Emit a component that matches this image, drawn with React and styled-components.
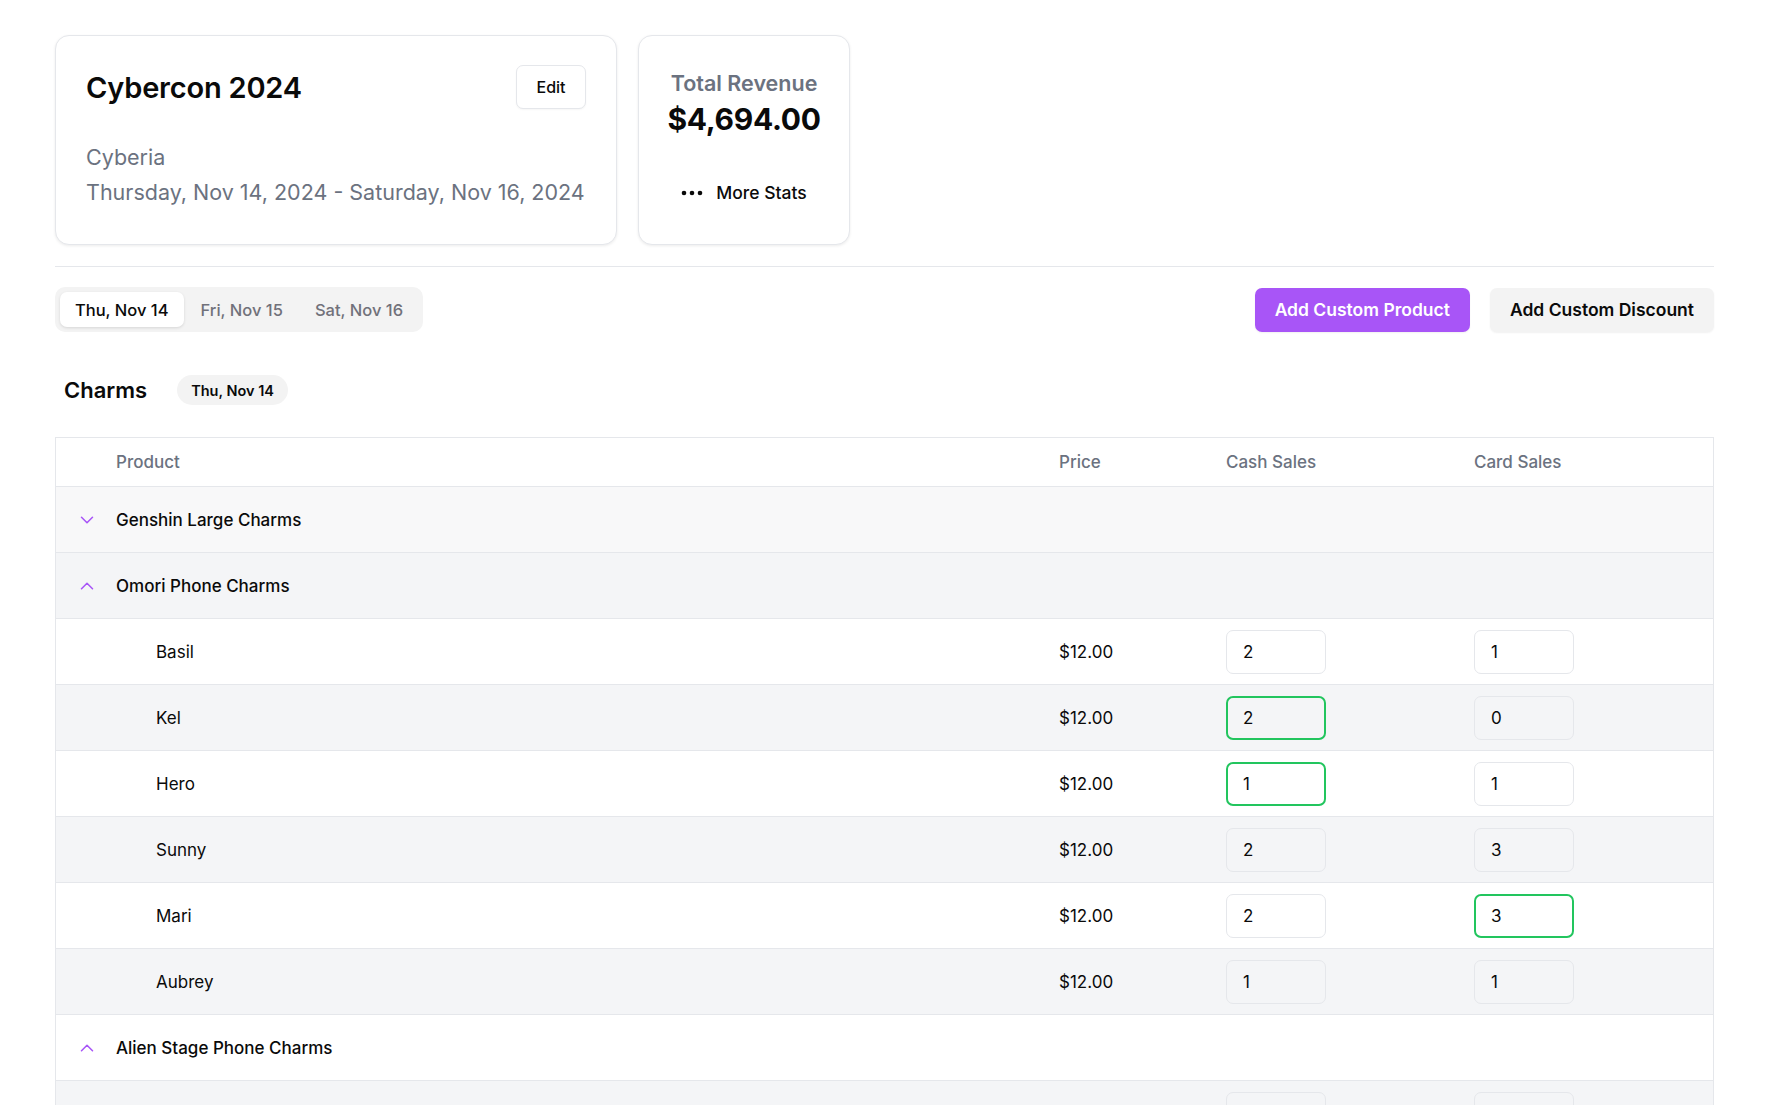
import React, { useState } from 'react';
import styled, { createGlobalStyle } from 'styled-components';

const GlobalStyle = createGlobalStyle`
  * { box-sizing: border-box; }
  body {
    margin: 0;
    background: #fff;
    font-family: Inter, "Noto Sans", sans-serif;
    color: #0a0a0a;
  }
`;

const Page = styled.div`
  padding: 35px 54px 40px 55px;
`;

const CardRow = styled.div`
  display: flex;
  gap: 21px;
`;

const Card = styled.div`
  background: #fff;
  border: 1px solid #e5e7eb;
  border-radius: 14px;
  box-shadow: 0 1px 3px rgba(0, 0, 0, 0.08);
`;

const EventCard = styled(Card)`
  width: 562px;
  height: 210px;
  padding: 29px 30px 0 30px;
`;

const EventHead = styled.div`
  display: flex;
  align-items: center;
  justify-content: space-between;
  height: 44px;
  margin-bottom: 31px;
`;

const EventTitle = styled.h1`
  margin: 0;
  font-size: 29px;
  font-weight: 600;
  letter-spacing: -0.2px;
`;

const EditButton = styled.button`
  width: 70px;
  height: 44px;
  border: 1px solid #e5e7eb;
  border-radius: 7px;
  background: #fff;
  font-family: inherit;
  font-size: 16px;
  font-weight: 500;
  color: #0a0a0a;
  box-shadow: 0 1px 2px rgba(0, 0, 0, 0.04);
`;

const Meta = styled.div`
  font-size: 21.5px;
  line-height: 35px;
  color: #6b7280;
`;

const StatsCard = styled(Card)`
  width: 212px;
  height: 210px;
  display: flex;
  flex-direction: column;
  align-items: center;
  padding-top: 30px;
`;

const StatLabel = styled.div`
  font-size: 21.5px;
  font-weight: 600;
  color: #6b7280;
  line-height: 34px;
`;

const StatValue = styled.div`
  font-size: 30px;
  font-weight: 700;
  line-height: 38px;
  letter-spacing: -0.3px;
`;

const MoreStats = styled.button`
  margin-top: 44px;
  display: flex;
  align-items: center;
  gap: 13px;
  border: none;
  background: none;
  padding: 0;
  font-family: inherit;
  font-size: 17.5px;
  font-weight: 500;
  color: #0a0a0a;
`;

const Divider = styled.hr`
  margin: 21px 0 20px;
  border: none;
  border-top: 1px solid #e5e7eb;
`;

const Toolbar = styled.div`
  display: flex;
  align-items: center;
  justify-content: space-between;
`;

const Tabs = styled.div`
  display: flex;
  gap: 2px;
  padding: 5px;
  background: #f3f3f3;
  border-radius: 10px;
`;

const Tab = styled.button`
  height: 35px;
  padding: 0 15px;
  border: none;
  border-radius: 7px;
  font-family: inherit;
  font-size: 16.5px;
  font-weight: 500;
  background: ${p => (p.$active ? '#fff' : 'transparent')};
  color: ${p => (p.$active ? '#0a0a0a' : '#71717a')};
  box-shadow: ${p => (p.$active ? '0 1px 3px rgba(0,0,0,0.12)' : 'none')};
`;

const Actions = styled.div`
  display: flex;
  gap: 20px;
`;

const ActionButton = styled.button`
  height: 44px;
  padding: 0 20px;
  border: none;
  border-radius: 7px;
  font-family: inherit;
  font-size: 17.5px;
  font-weight: 600;
  background: ${p => (p.$primary ? '#a855f7' : '#f3f3f3')};
  color: ${p => (p.$primary ? '#fff' : '#0a0a0a')};
  box-shadow: 0 1px 2px rgba(0, 0, 0, 0.06);
`;

const SectionHead = styled.div`
  display: flex;
  align-items: center;
  gap: 30px;
  margin: 43px 0 32px 9px;
`;

const SectionTitle = styled.h2`
  margin: 0;
  font-size: 22px;
  font-weight: 600;
`;

const Badge = styled.span`
  height: 30px;
  padding: 0 14px;
  display: inline-flex;
  align-items: center;
  border-radius: 15px;
  background: #f3f3f3;
  font-size: 14.5px;
  font-weight: 600;
`;

const Table = styled.div`
  border: 1px solid #e5e7eb;
  border-bottom: none;
`;

const cols = '60px 1fr 167px 248px 239px';

const HeadRow = styled.div`
  display: grid;
  grid-template-columns: ${cols};
  align-items: center;
  height: 49px;
  border-bottom: 1px solid #e5e7eb;
  font-size: 17px;
  font-weight: 500;
  color: #6b7280;
`;

const Row = styled.div`
  display: grid;
  grid-template-columns: ${cols};
  align-items: center;
  height: 66px;
  border-bottom: 1px solid #e5e7eb;
  background: ${p => p.$bg};
  font-size: 17px;
`;

const Chevron = styled.span`
  display: flex;
  justify-content: center;
  padding-left: 1px;
  color: #a855f7;
`;

const Name = styled.span`
  padding-left: ${p => (p.$child ? '40px' : '0')};
  font-weight: ${p => (p.$child ? 400 : 500)};
`;

const Price = styled.span`
  font-weight: 400;
`;

const QtyInput = styled.input`
  width: 100px;
  height: 44px;
  padding: 0 ${p => (p.$edited ? '15px' : '16px')};
  border: ${p => (p.$edited ? '2px solid #22c55e' : '1px solid #e5e7eb')};
  border-radius: 7px;
  background: transparent;
  font-family: inherit;
  font-size: 17px;
  color: #0a0a0a;
  outline: none;
`;

const ChevronIcon = ({ up }) => (
  <svg width="22" height="22" viewBox="0 0 24 24" fill="none" stroke="currentColor" strokeWidth="1.7" strokeLinecap="round" strokeLinejoin="round">
    {up ? <path d="M6 15l6-6 6 6" /> : <path d="M6 9l6 6 6-6" />}
  </svg>
);

const Dots = () => (
  <svg width="22" height="6" viewBox="0 0 22 6" fill="#0a0a0a">
    <circle cx="3" cy="3" r="2.3" />
    <circle cx="11" cy="3" r="2.3" />
    <circle cx="19" cy="3" r="2.3" />
  </svg>
);

const rows = [
  { type: 'group', name: 'Genshin Large Charms', open: false },
  { type: 'group', name: 'Omori Phone Charms', open: true },
  { type: 'item', name: 'Basil', cash: '2', card: '1' },
  { type: 'item', name: 'Kel', cash: '2', card: '0', cashEdited: true },
  { type: 'item', name: 'Hero', cash: '1', card: '1', cashEdited: true },
  { type: 'item', name: 'Sunny', cash: '2', card: '3' },
  { type: 'item', name: 'Mari', cash: '2', card: '3', cardEdited: true },
  { type: 'item', name: 'Aubrey', cash: '1', card: '1' },
  { type: 'group', name: 'Alien Stage Phone Charms', open: true },
  { type: 'item', name: 'Mizi', cash: '1', card: '2' },
];

const rowBg = i => (i === 0 ? '#f8f8f9' : i % 2 === 1 ? '#f4f5f7' : '#fff');

export default function App() {
  const [day, setDay] = useState(0);
  const days = ['Thu, Nov 14', 'Fri, Nov 15', 'Sat, Nov 16'];

  return (
    <Page>
      <GlobalStyle />
      <CardRow>
        <EventCard>
          <EventHead>
            <EventTitle>Cybercon 2024</EventTitle>
            <EditButton>Edit</EditButton>
          </EventHead>
          <Meta>Cyberia</Meta>
          <Meta>Thursday, Nov 14, 2024 - Saturday, Nov 16, 2024</Meta>
        </EventCard>
        <StatsCard>
          <StatLabel>Total Revenue</StatLabel>
          <StatValue>$4,694.00</StatValue>
          <MoreStats>
            <Dots />
            More Stats
          </MoreStats>
        </StatsCard>
      </CardRow>

      <Divider />

      <Toolbar>
        <Tabs>
          {days.map((d, i) => (
            <Tab key={d} $active={i === day} onClick={() => setDay(i)}>
              {d}
            </Tab>
          ))}
        </Tabs>
        <Actions>
          <ActionButton $primary>Add Custom Product</ActionButton>
          <ActionButton>Add Custom Discount</ActionButton>
        </Actions>
      </Toolbar>

      <SectionHead>
        <SectionTitle>Charms</SectionTitle>
        <Badge>{days[day]}</Badge>
      </SectionHead>

      <Table>
        <HeadRow>
          <span />
          <span>Product</span>
          <span>Price</span>
          <span>Cash Sales</span>
          <span>Card Sales</span>
        </HeadRow>
        {rows.map((r, i) =>
          r.type === 'group' ? (
            <Row key={r.name} $bg={rowBg(i)}>
              <Chevron>
                <ChevronIcon up={r.open} />
              </Chevron>
              <Name>{r.name}</Name>
            </Row>
          ) : (
            <Row key={r.name} $bg={rowBg(i)}>
              <span />
              <Name $child>{r.name}</Name>
              <Price>$12.00</Price>
              <span>
                <QtyInput defaultValue={r.cash} $edited={r.cashEdited} />
              </span>
              <span>
                <QtyInput defaultValue={r.card} $edited={r.cardEdited} />
              </span>
            </Row>
          )
        )}
      </Table>
    </Page>
  );
}
